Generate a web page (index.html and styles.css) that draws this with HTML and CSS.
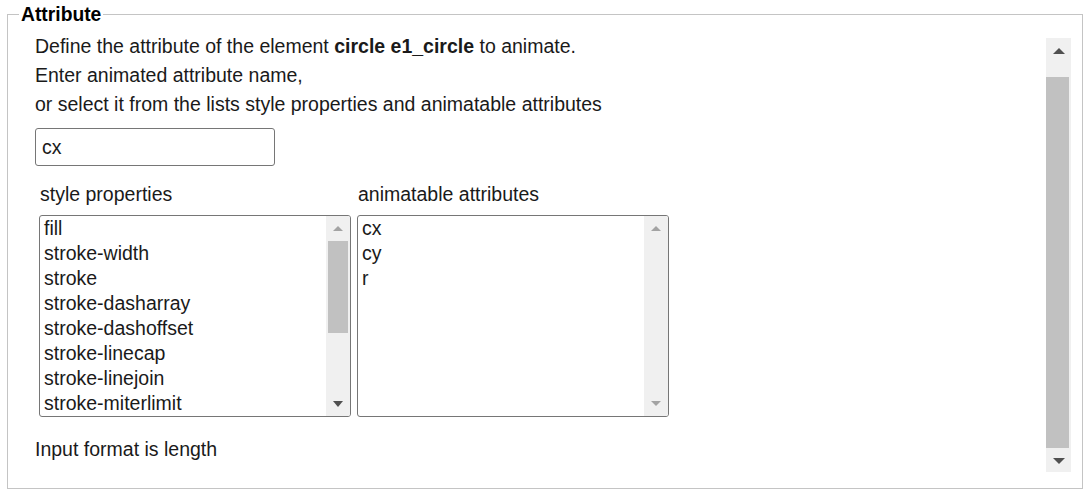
FILE: index.html
```html
<!DOCTYPE html>
<html>
<head>
<meta charset="utf-8">
<link rel="stylesheet" href="styles.css">
</head>
<body>
<fieldset class="panel">
  <legend class="panel-title">Attribute</legend>
  <div class="scroller">
    <div class="content">
      <p class="line">Define the attribute of the element <b>circle e1_circle</b> to animate.</p>
      <p class="line">Enter animated attribute name,</p>
      <p class="line">or select it from the lists style properties and animatable attributes</p>
      <input class="name-input" type="text" value="cx">
      <div class="lists">
        <div class="col">
          <div class="col-label">style properties</div>
          <div class="listbox">
            <div class="items">
              <div class="item">fill</div>
              <div class="item">stroke-width</div>
              <div class="item">stroke</div>
              <div class="item">stroke-dasharray</div>
              <div class="item">stroke-dashoffset</div>
              <div class="item">stroke-linecap</div>
              <div class="item">stroke-linejoin</div>
              <div class="item">stroke-miterlimit</div>
            </div>
            <div class="sbar small">
              <div class="sbtn"><span class="tri up light"></span></div>
              <div class="strack"><div class="sthumb small-thumb"></div></div>
              <div class="sbtn"><span class="tri down dark"></span></div>
            </div>
          </div>
        </div>
        <div class="col">
          <div class="col-label">animatable attributes</div>
          <div class="listbox">
            <div class="items">
              <div class="item">cx</div>
              <div class="item">cy</div>
              <div class="item">r</div>
            </div>
            <div class="sbar small">
              <div class="sbtn"><span class="tri up light"></span></div>
              <div class="strack"></div>
              <div class="sbtn"><span class="tri down light"></span></div>
            </div>
          </div>
        </div>
      </div>
      <p class="line format">Input format is length</p>
    </div>
    <div class="sbar main">
      <div class="sbtn"><span class="tri up dark big"></span></div>
      <div class="strack"><div class="sthumb main-thumb"></div></div>
      <div class="sbtn"><span class="tri down dark big"></span></div>
    </div>
  </div>
</fieldset>
</body>
</html>
```

FILE: styles.css
```css
html, body {
  margin: 0;
  padding: 0;
  background: #fff;
}
body {
  font-family: "Liberation Sans", Arial, sans-serif;
  font-size: 19.5px;
  color: #1a1a1a;
  width: 1089px;
  height: 495px;
  overflow: hidden;
}
.panel {
  margin: 4px 6px 0 7px;
  padding: 7px 11px 16px 11px;
  border: 1px solid #c4c4c4;
  min-width: 0;
}
.panel-title {
  font-weight: bold;
  font-size: 19.3px;
  padding: 0 2px;
  color: #000;
  line-height: 21px;
}
.scroller {
  display: flex;
  height: 440px;
}
.content {
  flex: 1;
  padding-left: 16px;
  overflow: hidden;
}
.line {
  margin: 0;
  line-height: 29px;
}
.name-input {
  display: block;
  box-sizing: border-box;
  margin: 9px 0 0 0;
  width: 240px;
  height: 38px;
  border: 1px solid #767676;
  border-radius: 3px;
  padding: 0 6px;
  font-family: inherit;
  font-size: 19.5px;
  color: #1a1a1a;
}
.lists {
  display: flex;
  gap: 6px;
  margin: 14px 0 0 4px;
}
.col {
  width: 312px;
}
.col-label {
  line-height: 25px;
  margin-left: 1px;
  margin-bottom: 10px;
  position: relative;
  top: 2px;
}
.listbox {
  box-sizing: border-box;
  height: 202px;
  border: 1px solid #767676;
  border-radius: 3px;
  display: flex;
  overflow: hidden;
}
.items {
  flex: 1;
  padding: 0 0 0 4px;
  overflow: hidden;
}
.item {
  line-height: 25px;
  white-space: nowrap;
}
.format {
  margin-top: 18px;
}
.sbar {
  display: flex;
  flex-direction: column;
  background: #f0f0f0;
}
.sbar.small {
  width: 24px;
}
.sbar.main {
  width: 25px;
  margin-top: 6px;
}
.sbtn {
  height: 25px;
  display: flex;
  align-items: center;
  justify-content: center;
  flex: none;
}
.strack {
  flex: 1;
  position: relative;
}
.sthumb {
  background: #c1c1c1;
}
.small-thumb {
  height: 92px;
  margin: 0 2px;
}
.main-thumb {
  height: 371px;
  margin: 14px 2px 0 0;
}
.tri {
  width: 0;
  height: 0;
  border-left: 5px solid transparent;
  border-right: 5px solid transparent;
}
.tri.big {
  border-left-width: 6px;
  border-right-width: 6px;
}
.tri.up.dark { border-bottom: 6px solid #505050; }
.tri.down.dark { border-top: 6px solid #505050; }
.tri.up.light { border-bottom: 5px solid #a3a3a3; }
.tri.down.light { border-top: 5px solid #a3a3a3; }
```
